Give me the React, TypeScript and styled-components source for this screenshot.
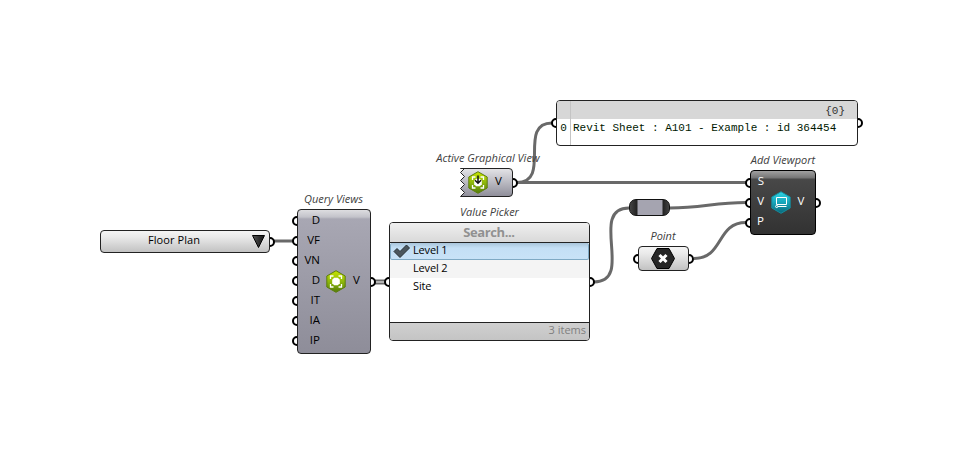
import React from "react";
import styled, { createGlobalStyle, css } from "styled-components";

const Global = createGlobalStyle`
  html, body { margin: 0; padding: 0; background: #fff; }
`;

const Canvas = styled.main`
  position: relative;
  width: 957px;
  height: 453px;
  overflow: hidden;
  background: #fff;
  font-family: "Open Sans", "Noto Sans", sans-serif;
  font-size: 11px;
  color: #000;
`;

const Wires = styled.svg`
  position: absolute;
  inset: 0;
  fill: none;
  stroke: #696969;
  stroke-width: 3;
`;

const Node = styled.section<{ $x: number; $y: number; $w: number; $h: number }>`
  position: absolute;
  left: ${(p) => p.$x}px;
  top: ${(p) => p.$y}px;
  width: ${(p) => p.$w}px;
  height: ${(p) => p.$h}px;
`;

const Caption = styled.h2<{ $shift?: number }>`
  position: absolute;
  left: calc(50% + ${(p) => p.$shift ?? 0}px);
  bottom: calc(100% + 3px);
  transform: translateX(-50%);
  margin: 0;
  font-size: 11px;
  line-height: 15px;
  font-weight: 400;
  font-style: italic;
  white-space: nowrap;
  color: #404040;
`;

const Port = styled.i<{ $side: "left" | "right"; $y: number }>`
  position: absolute;
  box-sizing: border-box;
  width: 10px;
  height: 10px;
  border: 2px solid #000;
  border-radius: 50%;
  background: #fff;
  top: ${(p) => p.$y - 5}px;
  ${(p) => (p.$side === "left" ? css`left: -5px;` : css`right: -5px;`)}
`;

const skins = {
  light: css`border-color: #222; background: linear-gradient(#f4f4f4 0, #e9e9e9 30%, #c2c2c2 100%);`,
  grey: css`border-color: #222; background: linear-gradient(#dddde0 0, #c3c3ca 7px, #a8a7b3 9px, #8e8d99 100%);`,
  dark: css`border-color: #000; background: linear-gradient(#a0a0a0 0, #747474 7px, #484848 8px, #323232 100%);`,
  paper: css`border-color: #222; background: #fff;`,
};

const Body = styled.div<{ $skin: keyof typeof skins }>`
  position: relative;
  box-sizing: border-box;
  display: flex;
  width: 100%;
  height: 100%;
  align-items: center;
  overflow: hidden;
  border: 1px solid;
  border-radius: 4px;
  ${(p) => skins[p.$skin]}
`;

const Choice = styled.span`
  flex: 1;
  padding: 0 4px 4px 0;
  text-align: center;
  letter-spacing: 0.08px;
`;

const Arrow = styled.svg`
  margin: 0 3px 0 0;
`;

const Inputs = styled.div<{ $w: number; $gap: number; $color?: string }>`
  display: flex;
  flex-direction: column;
  align-self: flex-start;
  width: ${(p) => p.$w}px;
  margin-right: ${(p) => p.$gap}px;
  color: ${(p) => p.$color ?? "#000"};
`;

const Param = styled.span`
  height: 20px;
  line-height: 19px;
  text-align: right;
  font-size: 11.5px;
`;

const Output = styled.span<{ $color?: string; $gap: number }>`
  margin-left: ${(p) => p.$gap}px;
  color: ${(p) => p.$color ?? "#000"};
  line-height: 16px;
  padding-bottom: 3px;
  font-size: 11.5px;
`;

const Column = styled(Body)`
  flex-direction: column;
  align-items: stretch;
`;

const Search = styled.header`
  box-sizing: border-box;
  height: 20px;
  flex: none;
  border-bottom: 1px solid #222;
  background: linear-gradient(#efefef, #d9d9d9);
  color: #919191;
  font-size: 13px;
  line-height: 18px;
  font-weight: 700;
  letter-spacing: -0.4px;
  text-align: center;
  padding-right: 1px;
`;

const Row = styled.div<{ $active?: boolean; $alt?: boolean }>`
  box-sizing: border-box;
  display: flex;
  align-items: flex-start;
  flex: none;
  height: 18px;
  padding-left: 2px;
  border: 1px solid transparent;
  ${(p) => p.$alt && css`background: #f4f4f4;`}
  ${(p) =>
    p.$active &&
    css`
      height: 17px;
      border-color: #7fa9c4;
      border-top: 0;
      border-radius: 2px;
      background: linear-gradient(#a9c5da, #c4dff5 5px, #c8e2f7);
    `}
`;

const CheckSlot = styled.span`
  display: flex;
  width: 20px;
  height: 16px;
`;

const RowText = styled.span`
  line-height: 13px;
  letter-spacing: -0.15px;
`;

const Footer = styled.footer`
  box-sizing: border-box;
  height: 18px;
  margin-top: auto;
  border-top: 1px solid #222;
  background: linear-gradient(#d0d0d0, #c4c4c4);
  color: #808080;
  text-align: right;
  line-height: 14px;
  padding-right: 3px;
`;

const PanelGrid = styled(Body)`
  display: grid;
  grid-template-columns: 14px 1fr;
  grid-template-rows: 18px 1fr;
  align-items: stretch;
  font-family: "Liberation Mono", monospace;
  font-size: 11px;
  color: #001800;
`;

const PanelCell = styled.div<{ $head?: boolean; $index?: boolean }>`
  line-height: 18px;
  white-space: pre;
  letter-spacing: -0.02px;
  ${(p) => p.$head && css`background: #d7d7d7; text-align: right; padding-right: 12px; line-height: 20px; color: #333;`}
  ${(p) => p.$index && css`border-right: 1px solid #c4c4c4; text-align: center; padding: 0;`}
  ${(p) => !p.$head && !p.$index && css`padding-left: 2px;`}
`;

const RelayBody = styled.div`
  box-sizing: border-box;
  height: 100%;
  border: 1px solid #111;
  border-radius: 7px;
  background: linear-gradient(90deg, #444 0, #222 7px, #a5a4b0 8px, #a5a4b0 32px, #222 33px, #444 100%);
`;

const Jagged = styled.svg`
  position: absolute;
  inset: 0;
`;

const JaggedContent = styled.div`
  position: relative;
  display: flex;
  align-items: center;
  height: 28px;
  padding-left: 7px;
`;

const PointIcon = styled.svg`
  margin: 0 auto;
  transform: translateX(-0.5px);
`;

const HEX = "M11 .7 20.200 6V17L11 22.300 1.800 17V6Z";

function GreenHex({ id, arrow }: { id: string; arrow?: boolean }) {
  return (
    <svg width="22" height="23" viewBox="0 0 22 23">
      <defs>
        <linearGradient id={id} x2="0" y2="1">
          <stop stopColor="#c8e400" />
          <stop offset=".5" stopColor="#8fb80c" />
          <stop offset="1" stopColor="#527c08" />
        </linearGradient>
      </defs>
      <path d={HEX} fill={`url(#${id})`} stroke="#5d7c10" strokeLinejoin="round" />
      <path
        d="M5.500 9V6H8.500M13.500 6h3V9M16.500 14v3H13.500M8.500 17H5.500V14"
        fill="none"
        stroke="#fff"
        strokeWidth="1.300"
      />
      <path d="M9.200 7.700h3.600l2 2v3.600l-2 2H9.200l-2-2V9.700Z" fill="#fff" />
      {arrow && <path d="M11 4.500v7.500M8 9.200l3 3 3-3" fill="none" stroke="#111" strokeWidth="1.500" />}
    </svg>
  );
}

function ViewportHex() {
  return (
    <svg width="22" height="23" viewBox="0 0 22 23">
      <defs>
        <linearGradient id="cyan" x2="0" y2="1">
          <stop stopColor="#30d5e5" />
          <stop offset=".5" stopColor="#16a5ba" />
          <stop offset="1" stopColor="#096779" />
        </linearGradient>
      </defs>
      <path d={HEX} fill="url(#cyan)" stroke="#158c9d" strokeLinejoin="round" />
      <path d="M6.500 6.500h10v7H6.500ZM8 15.500h8.500" fill="none" stroke="#fff" />
      <circle cx="6.700" cy="15.500" r="1.100" fill="none" stroke="#fff" />
    </svg>
  );
}

const INPUTS = ["D", "VF", "VN", "D", "IT", "IA", "IP"];

export default function App() {
  return (
    <>
      <Global />
      <Canvas>
        <Wires width="957" height="453">
          <path d="M274 241H293M517 182.500H747" />
          <path d="M375 280.500H386M375 283.500H386" strokeWidth="2" />
          <path d="M517 182.500C552 182.500 517 123 552 123" />
          <path d="M594 282C635 282 588 208 629 208" />
          <path d="M670 208C702 208 714 202.500 746 202.500" />
          <path d="M694 258.500C724 258.500 716 222.500 746 222.500" />
        </Wires>

        <Node $x={100} $y={230} $w={170} $h={23}>
          <Port $side="right" $y={11.5} />
          <Body $skin="light">
            <Choice>Floor Plan</Choice>
            <Arrow width="15" height="15" viewBox="0 0 15 15">
              <defs>
                <linearGradient id="arrow">
                  <stop stopColor="#555" />
                  <stop offset="1" stopColor="#111" />
                </linearGradient>
              </defs>
              <path d="M1.500 1.500h12L7.500 13.500Z" fill="url(#arrow)" stroke="#000" />
            </Arrow>
          </Body>
        </Node>

        <Node $x={297} $y={209} $w={74} $h={145}>
          <Caption $shift={-0.5}>Query Views</Caption>
          {INPUTS.map((_, i) => (
            <Port key={i} $side="left" $y={12 + i * 20} />
          ))}
          <Port $side="right" $y={72.5} />
          <Body $skin="grey">
            <Inputs $w={22} $gap={4.5}>
              {INPUTS.map((name, i) => (
                <Param key={i}>{name}</Param>
              ))}
            </Inputs>
            <GreenHex id="query" />
            <Output $gap={6.5}>V</Output>
          </Body>
        </Node>

        <Node $x={389} $y={222} $w={201} $h={119}>
          <Caption>Value Picker</Caption>
          <Port $side="left" $y={60} />
          <Port $side="right" $y={60} />
          <Column $skin="paper">
            <Search>Search...</Search>
            <Row $active>
              <CheckSlot>
                <svg width="18" height="16" viewBox="0 0 18 16">
                  <path d="M1 8.500 4 5.500 7 8.500 13.500 2 16.500 5 7 14.500Z" fill="#4b565d" stroke="#272e33" />
                </svg>
              </CheckSlot>
              <RowText>Level 1</RowText>
            </Row>
            <Row $alt>
              <CheckSlot />
              <RowText>Level 2</RowText>
            </Row>
            <Row>
              <CheckSlot />
              <RowText>Site</RowText>
            </Row>
            <Footer>3 items</Footer>
          </Column>
        </Node>

        <Node $x={460} $y={168} $w={53} $h={29}>
          <Caption $shift={1.5}>Active Graphical View</Caption>
          <Port $side="right" $y={14.5} />
          <Jagged width="53" height="29">
            <defs>
              <linearGradient id="jag" x2="0" y2="1">
                <stop stopColor="#e4e4e7" />
                <stop offset=".4" stopColor="#c2c2c9" />
                <stop offset="1" stopColor="#8e8d99" />
              </linearGradient>
            </defs>
            <path
              d="M.5.5H49Q52.500.500 52.500 4V25Q52.500 28.500 49 28.500H.5L4.500 24.500.5 20.500 4.500 16.500.5 12.500 4.500 8.500.5 4.500 4.500.5Z"
              fill="url(#jag)"
              stroke="#222"
            />
          </Jagged>
          <JaggedContent>
            <GreenHex id="active" arrow />
            <Output $gap={6}>V</Output>
          </JaggedContent>
        </Node>

        <Node $x={556} $y={100} $w={302} $h={46}>
          <Port $side="left" $y={23} />
          <Port $side="right" $y={23} />
          <PanelGrid $skin="paper">
            <PanelCell $head $index />
            <PanelCell $head>{"{0}"}</PanelCell>
            <PanelCell $index>0</PanelCell>
            <PanelCell>Revit Sheet : A101 - Example : id 364454</PanelCell>
          </PanelGrid>
        </Node>

        <Node $x={629} $y={199} $w={41} $h={17}>
          <RelayBody />
        </Node>

        <Node $x={638} $y={246} $w={51} $h={25}>
          <Caption $shift={-0.5}>Point</Caption>
          <Port $side="left" $y={12.5} />
          <Port $side="right" $y={12.5} />
          <Body $skin="light">
            <PointIcon width="25" height="23" viewBox="0 0 25 23">
              <path d="M6.500 1.500h12L24 11.500 18.500 21.500h-12L1 11.500Z" fill="#262626" stroke="#000" />
              <path d="m9 8 7 7m0-7-7 7" stroke="#fff" strokeWidth="3" />
            </PointIcon>
          </Body>
        </Node>

        <Node $x={750} $y={170} $w={66} $h={65}>
          <Caption>Add Viewport</Caption>
          <Port $side="left" $y={12.5} />
          <Port $side="left" $y={32.5} />
          <Port $side="left" $y={52.5} />
          <Port $side="right" $y={32.5} />
          <Body $skin="dark">
            <Inputs $w={13} $gap={5.5} $color="#fff">
              <Param>S</Param>
              <Param>V</Param>
              <Param>P</Param>
            </Inputs>
            <ViewportHex />
            <Output $gap={6} $color="#fff">V</Output>
          </Body>
        </Node>
      </Canvas>
    </>
  );
}
